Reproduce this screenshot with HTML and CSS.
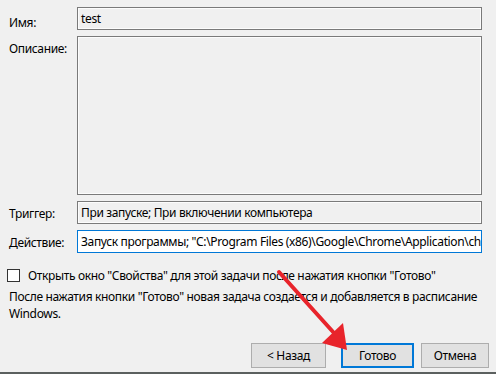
FILE: index.html
```html
<!DOCTYPE html>
<html lang="ru">
<head>
<meta charset="utf-8">
<link rel="stylesheet" href="styles.css">
</head>
<body>
<div class="page">
  <div class="form">
    <div class="label label-name">Имя:</div>
    <div class="field field-name">test</div>
    <div class="label">Описание:</div>
    <div class="field field-desc"></div>
    <div class="label">Триггер:</div>
    <div class="field field-row">При запуске; При включении компьютера</div>
    <div class="label">Действие:</div>
    <div class="field field-row field-focus">Запуск программы; "C:\Program Files (x86)\Google\Chrome\Application\chrome.exe"</div>
  </div>
  <div class="check-row">
    <span class="checkbox"></span>
    <span class="check-label">Открыть окно "Свойства" для этой задачи после нажатия кнопки "Готово"</span>
  </div>
  <p class="note">После нажатия кнопки "Готово" новая задача создается и добавляется в расписание Windows.</p>
  <div class="buttons">
    <button class="btn">&lt; Назад</button>
    <button class="btn btn-default">Готово</button>
    <button class="btn">Отмена</button>
  </div>
  <div class="bottom-line"></div>
  <svg class="arrow" width="496" height="374" viewBox="0 0 496 374">
    <line x1="279" y1="272" x2="334" y2="333" stroke="#e8242b" stroke-width="4" stroke-linecap="round"/>
    <polygon points="322,343 343,323 347,350" fill="#e8242b"/>
  </svg>
</div>
</body>
</html>
```

FILE: styles.css
```css
html, body {
  margin: 0;
  padding: 0;
  background: #f0f0f0;
}
body {
  font-family: "Noto Sans", "Open Sans", "Liberation Sans", sans-serif;
  font-size: 12px;
  letter-spacing: -0.35px;
  color: #000;
  width: 496px;
  height: 374px;
  overflow: hidden;
}
.page {
  position: relative;
  width: 496px;
  height: 374px;
  display: flex;
  flex-direction: column;
}
.form {
  display: grid;
  grid-template-columns: 68px 405px;
  grid-template-rows: 23px 159px 23px 23px;
  row-gap: 6px;
  padding: 7px 0 0 9px;
}
.form > .field:nth-of-type(3) { margin-top: 1px; }
.label {
  line-height: 15px;
  padding-top: 5px;
  white-space: nowrap;
}
.label-name { padding-top: 8px; }
.field {
  box-sizing: border-box;
  border: 1px solid #7a7a7a;
  box-shadow: inset 0 0 0 1px #fcfcfc;
  background: #f0f0f0;
  line-height: 15px;
  padding: 3px 3px 0 3px;
  white-space: nowrap;
  overflow: hidden;
}
.field-focus {
  border-color: #0078d7;
  background: #fff;
  box-shadow: none;
}
.check-row {
  display: flex;
  align-items: center;
  margin: 15px 0 0 7px;
  height: 15px;
}
.checkbox {
  box-sizing: border-box;
  width: 13px;
  height: 13px;
  border: 1px solid #333;
  background: #fff;
  margin-right: 8px;
}
.check-label {
  line-height: 15px;
  white-space: nowrap;
}
.note {
  margin: 5px 0 0 9px;
  line-height: 17px;
  width: 480px;
}
.buttons {
  display: flex;
  margin: auto 0 0 251px;
  height: 25px;
}
.btn {
  box-sizing: border-box;
  height: 25px;
  width: 75px;
  border: 1px solid #adadad;
  background: #e1e1e1;
  font: inherit;
  letter-spacing: inherit;
  color: #000;
  padding: 0;
  margin: 0;
}
.btn-default {
  border: 2px solid #0078d7;
  width: 73px;
  margin-left: 15px;
}
.btn + .btn:last-child {
  margin-left: 7px;
  width: 68px;
}
.bottom-line {
  margin-top: 4px;
  height: 2px;
  background: #5b605f;
}
.arrow {
  position: absolute;
  left: 0;
  top: 0;
  pointer-events: none;
}
```
